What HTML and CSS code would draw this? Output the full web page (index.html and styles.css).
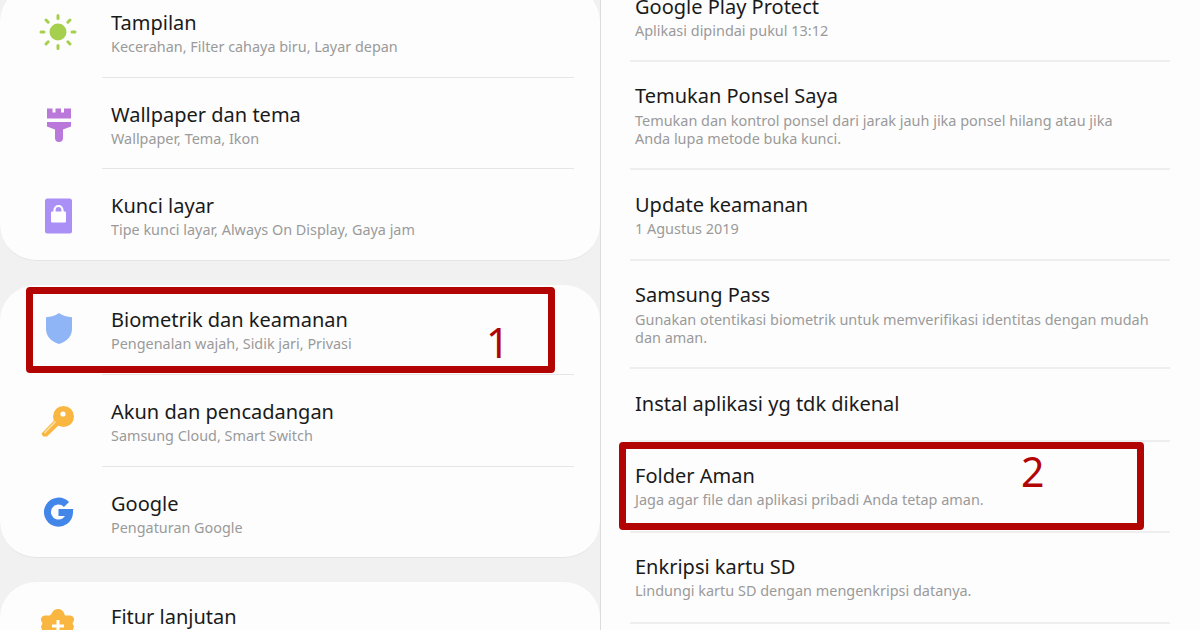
FILE: index.html
```html
<!DOCTYPE html>
<html lang="en">
<head>
    <meta charset="UTF-8">
    <title>Pengaturan</title>
    <link rel="stylesheet" href="styles.css">
</head>
<body>
    <div class="screen">
        <div class="left">
            <div class="card">
                <div class="row row-first">
                    <div class="icon">
                        <svg width="40" height="40" viewBox="0 0 40 40">
                            <circle cx="20" cy="20" r="8.5" fill="#a5d04e"/>
                            <g stroke="#a5d04e" stroke-width="3" stroke-linecap="round">
                                <path d="M20 3.500v3M20 33.500v3M3 20h3M34 20h3M8 8l2.200 2.200M32 8l-2.200 2.200M8 32l2.200-2.200M32 32l-2.200-2.200"/>
                            </g>
                        </svg>
                    </div>
                    <div class="body">
                        <div class="title">Tampilan</div>
                        <div class="sub">Kecerahan, Filter cahaya biru, Layar depan</div>
                    </div>
                </div>
                <div class="row">
                    <div class="icon">
                        <svg width="40" height="40" viewBox="0 0 40 40">
                            <path d="M9 4.500h5.500v4h3v-4h5.500v4h3v-4H33v10H9z" fill="#b978da"/>
                            <path d="M9 18h24v4.500l-8 3V34a4 4 0 0 1-8 0v-8.500l-8-3z" fill="#b978da"/>
                        </svg>
                    </div>
                    <div class="body">
                        <div class="title">Wallpaper dan tema</div>
                        <div class="sub">Wallpaper, Tema, Ikon</div>
                    </div>
                </div>
                <div class="row row-last">
                    <div class="icon">
                        <svg width="40" height="40" viewBox="0 0 40 40">
                            <rect x="7" y="3.500" width="27" height="35" rx="2.500" fill="#a98ff6"/>
                            <path d="M16.500 17v-2a4 4 0 0 1 8 0v2" fill="none" stroke="#fff" stroke-width="2.200"/>
                            <rect x="13" y="16.500" width="15" height="11" rx="1" fill="#fff"/>
                        </svg>
                    </div>
                    <div class="body">
                        <div class="title">Kunci layar</div>
                        <div class="sub">Tipe kunci layar, Always On Display, Gaya jam</div>
                    </div>
                </div>
            </div>

            <div class="card">
                <div class="row row-top">
                    <div class="icon">
                        <svg width="40" height="40" viewBox="0 0 40 40">
                            <path d="M21 3c3.500 2.500 8 3.800 13 4.200V19c0 7.500-5.500 13-13 15C13.500 32 8 26.500 8 19V7.200C13 6.800 17.500 5.500 21 3z" fill="#8fb5f6"/>
                        </svg>
                    </div>
                    <div class="body body-high">
                        <div class="title">Biometrik dan keamanan</div>
                        <div class="sub">Pengenalan wajah, Sidik jari, Privasi</div>
                    </div>
                </div>
                <div class="row row-mid">
                    <div class="icon">
                        <svg width="40" height="40" viewBox="0 0 40 40">
                            <path d="M5 35.500l-1.500-3 14-14.500 4.500 5L9 35.500z" fill="#f9b641"/>
                            <circle cx="25.500" cy="15.500" r="10.500" fill="#f9b641"/>
                            <circle cx="25" cy="13" r="2.600" fill="#fff"/>
                            <path d="M6.500 32l11-11.500" stroke="#fde3ad" stroke-width="1.400"/>
                        </svg>
                    </div>
                    <div class="body">
                        <div class="title">Akun dan pencadangan</div>
                        <div class="sub">Samsung Cloud, Smart Switch</div>
                    </div>
                </div>
                <div class="row row-top row-last">
                    <div class="icon">
                        <svg width="40" height="40" viewBox="0 0 40 40">
                            <path d="M28.500 12.500A11 11 0 1 0 31.500 20.500H20.500" fill="none" stroke="#4286e9" stroke-width="7"/>
                        </svg>
                    </div>
                    <div class="body">
                        <div class="title">Google</div>
                        <div class="sub">Pengaturan Google</div>
                    </div>
                </div>
            </div>

            <div class="card">
                <div class="row row-top row-last">
                    <div class="icon">
                        <svg width="40" height="40" viewBox="0 0 40 40">
                            <path d="M14 6a6.500 6.500 0 0 1 12 0l1 2.500h5a4 4 0 0 1 3.500 6l-1 2 1.500 3-2 7-3 4H8l-3-4-2-7 1.500-3-1-2a4 4 0 0 1 3.500-6h5z" fill="#f9b641"/>
                            <path d="M20 13v12M14 19h12" stroke="#fff" stroke-width="3"/>
                        </svg>
                    </div>
                    <div class="body body-cut">
                        <div class="title">Fitur lanjutan</div>
                    </div>
                </div>
            </div>
        </div>

        <div class="right">
            <div class="item item-first">
                <div class="title">Google Play Protect</div>
                <div class="sub">Aplikasi dipindai pukul 13:12</div>
            </div>
            <div class="item item-tall">
                <div class="title">Temukan Ponsel Saya</div>
                <div class="sub">Temukan dan kontrol ponsel dari jarak jauh jika ponsel hilang atau jika<br>Anda lupa metode buka kunci.</div>
            </div>
            <div class="item item-low">
                <div class="title">Update keamanan</div>
                <div class="sub">1 Agustus 2019</div>
            </div>
            <div class="item item-tall">
                <div class="title">Samsung Pass</div>
                <div class="sub">Gunakan otentikasi biometrik untuk memverifikasi identitas dengan mudah<br>dan aman.</div>
            </div>
            <div class="item item-short">
                <div class="title">Instal aplikasi yg tdk dikenal</div>
            </div>
            <div class="item">
                <div class="title">Folder Aman</div>
                <div class="sub">Jaga agar file dan aplikasi pribadi Anda tetap aman.</div>
            </div>
            <div class="item">
                <div class="title">Enkripsi kartu SD</div>
                <div class="sub">Lindungi kartu SD dengan mengenkripsi datanya.</div>
            </div>
        </div>

        <div class="mark mark-one"><span class="mark-num">1</span></div>
        <div class="mark mark-two"><span class="mark-num">2</span></div>
    </div>
</body>
</html>
```

FILE: styles.css
```css
html, body {
    margin: 0;
    padding: 0;
}
body {
    font-family: "Noto Sans", Roboto, sans-serif;
    background-color: #f1f1f1;
    overflow: hidden;
}
.screen {
    position: relative;
    width: 1200px;
    height: 630px;
    display: flex;
    overflow: hidden;
}
.left {
    width: 600px;
    flex-shrink: 0;
    margin-top: -14px;
    display: flex;
    flex-direction: column;
    gap: 24px;
}
.card {
    background-color: #fdfdfd;
    border-radius: 36px;
    border-bottom: 1px solid #e4e4e4;
}
.row {
    display: flex;
    height: 91px;
    padding-left: 38px;
}
.row-first {
    height: 92px;
}
.row-top {
    height: 90px;
}
.row-mid {
    height: 92px;
}
.icon {
    width: 40px;
    margin-right: 24px;
    display: flex;
    align-items: center;
    justify-content: center;
}
.body {
    flex: 1;
    margin-right: 26px;
    padding-left: 9px;
    padding-top: 2px;
    display: flex;
    flex-direction: column;
    justify-content: center;
    border-bottom: 1px solid #e6e6e6;
}
.row-last .body {
    border-bottom: none;
}
.body-high {
    padding-top: 0;
    padding-bottom: 1px;
}
.body-cut {
    padding-top: 0;
    padding-bottom: 20px;
}
.title {
    font-size: 20px;
    line-height: 28px;
    color: #1a1a1a;
}
.sub {
    margin-top: 1px;
    font-size: 14.400px;
    line-height: 18px;
    color: #9a9a9a;
}
.right {
    flex: 1;
    margin-top: -31px;
    padding: 0 30px 0 29px;
    background-color: #fdfdfd;
    border-left: 1px solid #dcdcdc;
}
.right .sub {
    font-size: 14.450px;
}
.item {
    height: 91px;
    padding-left: 5px;
    padding-bottom: 2px;
    display: flex;
    flex-direction: column;
    justify-content: center;
    border-bottom: 2px solid #eeeeee;
    box-sizing: border-box;
}
.item-first {
    height: 93px;
    padding-top: 4px;
    padding-bottom: 0;
}
.item-low {
    padding-bottom: 0;
}
.item-tall {
    height: 108px;
    padding-bottom: 1px;
}
.item-tall .sub {
    margin-top: 2px;
}
.item-short {
    height: 73px;
}
.mark {
    position: absolute;
    box-sizing: border-box;
    border: 7px solid #b30404;
    border-radius: 4px;
}
.mark-one {
    left: 26px;
    top: 287px;
    width: 529px;
    height: 86px;
}
.mark-two {
    left: 619px;
    top: 442px;
    width: 525px;
    height: 88px;
}
.mark-num {
    position: absolute;
    font-size: 41px;
    line-height: 48px;
    color: #b30404;
}
.mark-one .mark-num {
    left: 453px;
    top: 24px;
}
.mark-two .mark-num {
    left: 395px;
    top: -2px;
}
```
